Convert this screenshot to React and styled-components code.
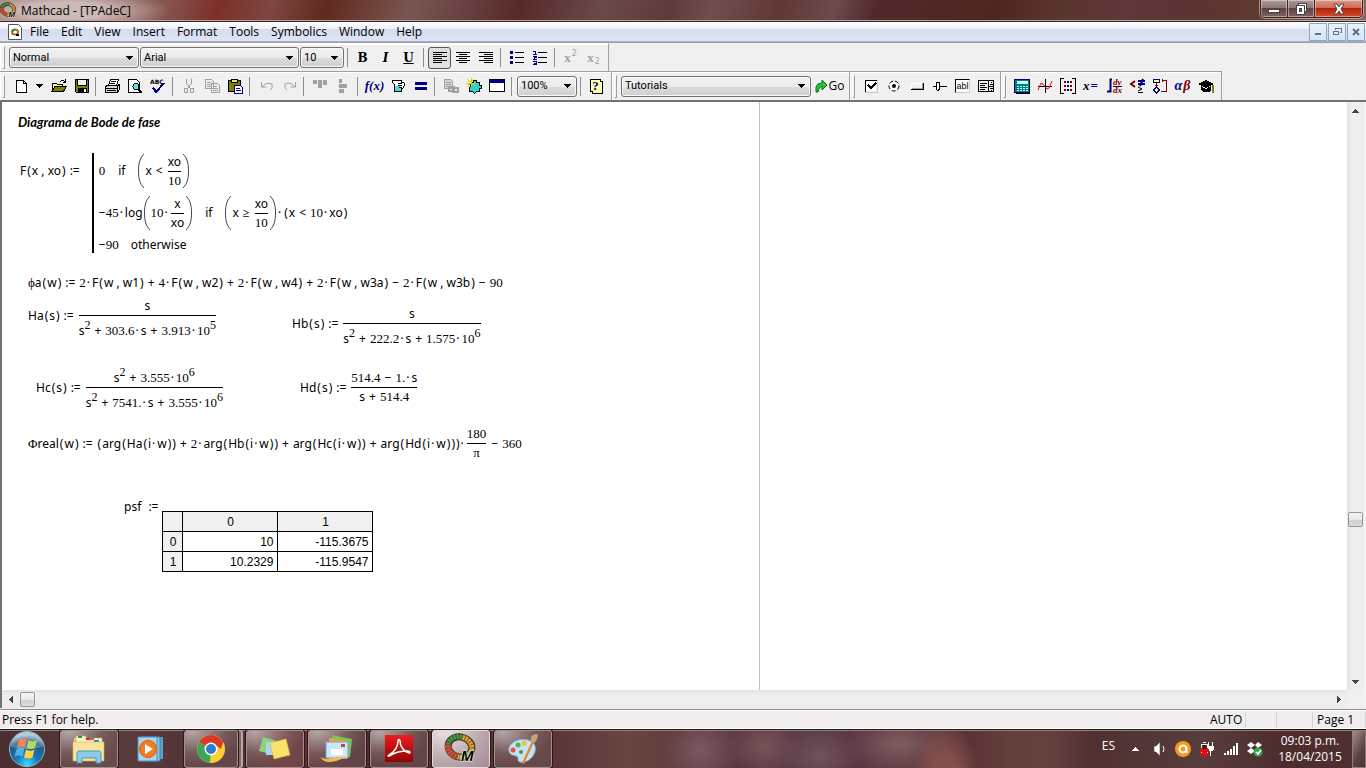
import React from "react";
import styled, { createGlobalStyle } from "styled-components";

const UI = '"Open Sans", "Noto Sans", sans-serif';
const MATH = '"Noto Sans", "Open Sans", sans-serif';
const NUM = '"Liberation Serif", serif';

const Global = createGlobalStyle`
  * { box-sizing: border-box; }
  body { margin: 0; font: 12px/16px ${UI}; color: #000; background: #f0f0f0; }
  button, select { font: inherit; color: inherit; padding: 0; margin: 0; border: 0; background: none; }
  svg { display: block; flex: none; }
`;

const Screen = styled.div`
  display: flex;
  flex-direction: column;
  min-height: 100vh;
  overflow: hidden;
`;

/* ---------- title bar ---------- */
const TitleBar = styled.header`
  display: flex;
  align-items: flex-start;
  height: 22px;
  border-bottom: 1px solid #3d2322;
  box-shadow: inset 0 -1px 0 #b9a5a4;
  background:
    radial-gradient(ellipse 105px 22px at 66px 11px, rgba(215, 198, 195, 0.85) 40%, rgba(180, 150, 145, 0) 100%),
    linear-gradient(110deg, #927571 0%, #8a625e 9%, #844f49 13%, #7c2f27 16%, #7d4741 20%, #5f291f 24%, #71483f 28%, #795653 30%, #684141 34%, #57292a 38%, #6a4a49 44%, #5e3b39 49%, #714e4e 52%, #5f3836 57%, #6d4a4c 61%, #51292c 64%, #4d281f 73%, #59352e 77%, #60373a 82%, #5a3534 87%, #603b2e 92%, #886463 100%);
`;
const Title = styled.h1`
  flex: 1;
  display: flex;
  align-items: center;
  gap: 4px;
  height: 21px;
  margin: 0;
  font-size: 12px;
  font-weight: 400;
`;
const WindowButtons = styled.div`
  display: flex;
  height: 18px;
  margin-right: 3px;
  border: 1px solid #35201f;
  border-top: 0;
  border-radius: 0 0 5px 5px;
  overflow: hidden;
  box-shadow: 0 0 0 1px rgba(255, 255, 255, 0.45);
`;
const WindowButton = styled.button`
  display: flex;
  align-items: center;
  justify-content: center;
  width: ${(p) => (p.$close ? 47 : 27)}px;
  height: 17px;
  border-right: ${(p) => (p.$close ? "0" : "1px solid #3d2726")};
  box-shadow: inset 0 0 0 1px rgba(255, 255, 255, 0.4);
  background: ${(p) =>
    p.$close
      ? "linear-gradient(#d99a8c 0, #cc6a57 45%, #b42109 50%, #d2502f 100%)"
      : "linear-gradient(#ab9897 0, #8f7776 45%, #5d4141 50%, #826463 100%)"};
`;

/* ---------- menu bar ---------- */
const MenuBar = styled.nav`
  display: flex;
  align-items: center;
  height: 20px;
  padding: 0 1px 0 8px;
  border-bottom: 1px solid #a9afc4;
  background: linear-gradient(#fff 0, #eef1f9 35%, #d5dcee 36%, #dde4f5 100%);
`;
const MenuItems = styled.div`
  display: flex;
  flex: 1;
  gap: 12px;
  margin-left: 8px;
`;
const MenuItem = styled.button`
  height: 18px;
`;
const ChildButtons = styled.div`
  display: flex;
  gap: 1px;
`;
const ChildButton = styled.button`
  display: flex;
  align-items: center;
  justify-content: center;
  width: 18px;
  height: 18px;
  border: 1px solid #8fa5bb;
  background: linear-gradient(#e9f3fc, #d4e5f6);
`;

/* ---------- tool bars ---------- */
const Bars = styled.div`
  display: flex;
  flex-direction: column;
  border-bottom: 2px solid #737373;
  background: #f0f0f0;
`;
const BarRow = styled.div`
  display: flex;
  height: 29px;
  border-top: ${(p) => (p.$partial ? 0 : 1)}px solid #a0a0a0;
`;
const Band = styled.div`
  display: flex;
  align-items: center;
  padding: 0 ${(p) => p.$end}px 0 2px;
  border-top: 1px solid ${(p) => (p.$top ? "#a0a0a0" : "#fff")};
  border-right: 1px solid #a0a0a0;
  box-shadow: inset 1px 1px 0 #fff;
`;
const Grip = styled.span`
  flex: none;
  width: 3px;
  height: 23px;
  margin-right: 4px;
  border: 1px solid #a0a0a0;
  border-left-color: #fff;
  border-top-color: #fff;
`;
const Rule = styled.span`
  flex: none;
  width: 1px;
  height: 19px;
  margin: 0 ${(p) => p.$right ?? 4}px 0 ${(p) => p.$left ?? 3}px;
  background: #8f8f8f;
`;
const Tool = styled.button`
  display: flex;
  align-items: center;
  justify-content: center;
  gap: 1px;
  flex: none;
  width: ${(p) => p.$w || 23}px;
  height: 22px;
  border: 1px solid ${(p) => (p.$on ? "#555" : "transparent")};
  border-radius: 3px;
  background: ${(p) => (p.$on ? "#e0e0e0" : "none")};
`;
const LetterTool = styled(Tool)`
  font: ${(p) => (p.$italic ? "italic " : "")}700 12px/16px "DejaVu Serif", serif;
  text-decoration: ${(p) => (p.$under ? "underline" : "none")};
`;
const ComboBox = styled.span`
  display: inline-grid;
  align-items: center;
  flex: none;
  width: ${(p) => p.$w}px;
  height: 21px;
  margin-right: ${(p) => p.$gap || 1}px;
  > * { grid-area: 1 / 1; }
  > svg { justify-self: end; margin-right: 5px; pointer-events: none; }
`;
const ComboSelect = styled.select`
  appearance: none;
  width: 100%;
  height: 21px;
  padding: 0 4px 0 3px;
  border: 1px solid #707070;
  border-radius: 3px;
  box-shadow: inset 0 0 0 1px #fafafa;
  background: linear-gradient(#f2f2f2, #ebebeb 50%, #dcdcdc 51%, #cfcfcf);
  font: 11px/16px Roboto, sans-serif;
`;

/* ---------- worksheet ---------- */
const Work = styled.main`
  display: grid;
  grid-template-columns: 1fr 17px;
  grid-template-rows: 1fr 18px;
  flex: 1;
  border-left: 2px solid #737373;
  border-right: 2px solid #f4f4f4;
  background: #f0f0f0;
`;
const Paper = styled.div`
  display: flex;
  background: #fff;
`;
const Sheet = styled.article`
  display: flex;
  flex-direction: column;
  align-items: flex-start;
  flex: 0 1 758px;
  padding: 12px 0 0 16px;
  border-right: 1px solid #c0c0c0;
`;
const Heading = styled.h2`
  margin: 0;
  font: italic 700 13px/16px Lato, sans-serif;
`;
const Region = styled.section`
  display: flex;
  align-items: flex-start;
  margin: ${(p) => p.$top}px 0 0 ${(p) => p.$left}px;
`;
const Pair = styled.div`
  display: grid;
  grid-template-columns: 264px auto;
  align-items: ${(p) => (p.$stagger ? "start" : "center")};
  margin: ${(p) => p.$top}px 0 0 ${(p) => p.$left}px;
  > :last-child { margin-top: ${(p) => (p.$stagger ? 8 : 0)}px; }
`;
const Math_ = styled.span`
  display: inline-flex;
  align-items: center;
  font: 12px/16px ${MATH};
  white-space: pre;
`;
const Run = styled.span`
  white-space: pre;
`;
const Num = styled.span`
  font: 13px/16px ${NUM};
`;
const Sup = styled.sup`
  font: 12px/0 ${NUM};
  vertical-align: 6px;
`;
const Op = styled.span`
  margin: 0 4px;
`;
const Dot = styled.span`
  margin: 0 2px 0 1px;
`;
const Delimiter = styled.span`
  padding-left: 1px;
  padding-right: ${(p) => (p.$close ? 0 : 1)}px;
`;
const Frac = styled.span`
  display: inline-grid;
  grid-template-rows: 1fr 1px 1fr;
  justify-items: center;
  margin: 0 1px;
  > :first-child { align-self: end; padding-bottom: 1px; }
  > :last-child { padding-top: ${(p) => (p.$tall ? 7 : 1)}px; }
`;
const FracBar = styled.span`
  width: 100%;
  height: 1px;
  background: #000;
`;
const Program = styled.div`
  display: flex;
  flex-direction: column;
  gap: 6px;
  margin-left: 8px;
  padding-left: 5px;
  border-left: 2px solid #000;
`;
const ProgramLine = styled.div`
  display: flex;
  align-items: center;
  min-height: ${(p) => (p.$short ? 16 : 36)}px;
`;
const Gap = styled.span`
  width: ${(p) => p.$w}px;
`;
const DataTable = styled.table`
  margin-top: 12px;
  border-collapse: collapse;
  font: 12px/16px "Liberation Sans", sans-serif;
  th, td {
    height: 20px;
    padding: 0 4px;
    border: 1px solid #000;
    font-weight: 400;
  }
  th { background: #f0f0f0; min-width: 20px; }
  thead th + th { width: 95px; }
  td { text-align: right; }
`;
const Scroll = styled.div`
  display: flex;
  flex-direction: ${(p) => (p.$v ? "column" : "row")};
  align-items: center;
  background: linear-gradient(${(p) => (p.$v ? "90deg, " : "")}#e3e3e3, #efefef 30%, #ececec);
`;
const Arrow = styled.button`
  display: flex;
  align-items: center;
  justify-content: center;
  width: 17px;
  height: 17px;
`;
const Thumb = styled.span`
  flex: none;
  width: 15px;
  height: 15px;
  border: 1px solid #979797;
  border-radius: 2px;
  background: linear-gradient(#f5f5f5, #e9e9eb 50%, #d0d0d3 51%, #dcdcdc);
`;
const Spacer = styled.span`
  flex: ${(p) => p.$n ?? 1};
`;

/* ---------- status bar ---------- */
const Status = styled.footer`
  display: flex;
  align-items: center;
  height: 20px;
  padding: 2px 0 0 2px;
  margin-top: 1px;
  border-top: 1px solid #8c8c8c;
  border-bottom: 1px solid #fff;
  box-shadow: inset 0 1px 0 #fff;
  background: #f1edec;
`;
const StatusCell = styled.span`
  width: ${(p) => p.$w}px;
  height: 16px;
  padding-left: 4px;
  border-right: 1px solid #d6d2d1;
`;

/* ---------- task bar ---------- */
const TaskBar = styled.div`
  display: flex;
  align-items: center;
  height: 39px;
  padding-left: 8px;
  border-top: 1px solid #1f1212;
  box-shadow: inset 0 1px 0 #9a8282;
  color: #fff;
  background:
    radial-gradient(ellipse 34px 60px at 945px 50px, #84504c 40%, rgba(132, 80, 76, 0)),
    radial-gradient(ellipse 55px 34px at 900px 14px, #7f5e5f, rgba(127, 94, 95, 0)),
    radial-gradient(ellipse 40px 30px at 820px 26px, #70525a, rgba(112, 82, 90, 0)),
    radial-gradient(ellipse 36px 30px at 765px 16px, #775458, rgba(119, 84, 88, 0)),
    radial-gradient(ellipse 40px 40px at 700px 20px, #7a5960, rgba(122, 89, 96, 0)),
    linear-gradient(90deg, #4a2e2f 0, #5c3c3c 8%, #4f3034 17%, #702f34 21%, #4d2b30 26%, #5a3436 40%, #674542 46%, #643f3d 48%, #5a3a3d 50%, #593a48 60%, #57303a 68%, #5a3434 71%, #633f3d 74%, #64403e 77%, #4f3030 80%, #583d3d 88%, #4d2c2c 94%, #4f3030 100%);
`;
const Start = styled.button`
  width: 38px;
  height: 38px;
  margin-right: 14px;
`;
const Task = styled.button`
  display: flex;
  align-items: center;
  justify-content: center;
  flex: none;
  width: ${(p) => p.$w || 58}px;
  height: 38px;
  margin-right: ${(p) => p.$gap || 4}px;
  border: 1px solid ${(p) => (p.$plain ? "transparent" : p.$active ? "#e4dcdc" : "#a38f8f")};
  border-radius: 3px;
  box-shadow: ${(p) => (p.$plain ? "none" : p.$stack ? "0 0 0 1px #2a1718, 4px 0 0 -1px #806869, 5px 0 0 0 #b6a5a5" : "0 0 0 1px #2a1718")};
  background: ${(p) =>
    p.$plain
      ? "none"
      : p.$active
      ? "radial-gradient(ellipse at 20% 0, #e9e1e1, #bdabaf 55%, #a3898f)"
      : "radial-gradient(ellipse 50px 34px at 15% 0, #b7a8a8, rgba(140, 115, 115, 0.6) 65%, rgba(120, 92, 92, 0.5))"};
`;
const Tray = styled.div`
  display: flex;
  align-items: center;
  gap: 8px;
`;
const TrayButton = styled.button`
  width: 16px;
  height: 16px;
`;
const Lang = styled.span`
  margin: 0 4px 6px 0;
`;
const Clock = styled.time`
  width: 76px;
  margin: 0 4px 0 9px;
  text-align: center;
`;
const ShowDesktop = styled.button`
  width: 14px;
  height: 38px;
  border: 1px solid #8f7b7b;
  background: linear-gradient(120deg, #a08d8d, #5d4242 60%, #4a3030);
`;

/* ---------- drawings ---------- */
const Pix = ({ children, w = 16, h = 16, smooth }) => (
  <svg width={w} height={h} viewBox={`0 0 ${w} ${h}`} shapeRendering={smooth ? "auto" : "crispEdges"} aria-hidden="true">
    {children}
  </svg>
);
const Caret = () => (
  <Pix w={8} h={4}><path d="M0 0h7v1h-1v1h-1v1h-1v1h-1v-1h-1v-1h-1v-1h-1z" /></Pix>
);
const Ring = ({ size = 16 }) => (
  <svg width={size} height={size} viewBox="0 0 32 32" overflow="visible" aria-hidden="true">
    <g transform="rotate(14 15 14)" fill="none">
      <ellipse cx="15" cy="14" rx="12" ry="10" stroke="#26301b" strokeWidth="7" />
      <path d="M3 14C3 7 9 4 15 4" stroke="#37a048" strokeWidth="5" />
      <path d="M15 4c7 0 12 5 12 10" stroke="#e2a33c" strokeWidth="5" />
      <path d="M27 14c0 6-6 10-12 10" stroke="#dccb48" strokeWidth="5" />
      <path d="M15 24C8 24 3 20 3 14" stroke="#d0563c" strokeWidth="6" />
      <ellipse cx="15" cy="14" rx="12" ry="10" stroke="#5a1f14" strokeOpacity=".6" strokeWidth="6" strokeDasharray="1 2" />
    </g>
    <text x="16" y="28" fontFamily="Liberation Sans" fontStyle="italic" fontWeight="700" fontSize="15" stroke="#fff" strokeWidth="1" paintOrder="stroke">M</text>
  </svg>
);

const N = "#000080";
const G = "#a0a0a0";
const R = "#800000";
const icons = {
  newDoc: <path d="M3.500 2.500h7l3 3v9h-10zM10.500 2.500v3h3" fill="#fff" stroke="#000" />,
  open: (
    <>
      <path d="M1.500 13.500v-8h4l1 1h5v2" fill="#ffff80" stroke="#000" />
      <path d="M1 13.500l3-5h11.500l-3 5z" fill="#808000" stroke="#000" />
      <path d="M9 3.500h1M10 2.500h3M13 3.500h1M14.500 1v4M12 4.500h2" stroke="#000" fill="none" />
    </>
  ),
  save: (
    <>
      <path d="M1.500 1.500h13v13h-12l-1-1z" fill="#808000" stroke="#000" />
      <path d="M3.500 1.500h9v6h-9z" fill="#f0f0f0" stroke="#000" />
      <path d="M4 10h9v5h-9z" fill="#000" /><path d="M10 11h2v3h-2z" fill="#fff" />
    </>
  ),
  print: (
    <>
      <path d="M4.500 7.500l2-6h8l-2 6" fill="#fff" stroke="#000" />
      <path d="M7 3.500h5M6 5.500h5" stroke="#000" />
      <path d="M1.500 8.500l2-1h10l2-1v5l-2 3h-12z" fill="#d8d8d8" stroke="#000" />
      <path d="M1 10.500h12M3 12.500h9M13.500 8v6" stroke="#000" /><path d="M9 11h2v1h-2z" fill="#cc0" />
    </>
  ),
  preview: (
    <>
      <path d="M1.500 14.500v-13h8l3 3v10z" fill="#fff" stroke="#000" />
      <circle cx="9" cy="8.500" r="3" fill="#60e0f0" stroke="#000" />
      <path d="M11 11l4 4" stroke="#000" strokeWidth="2" />
    </>
  ),
  spell: (
    <>
      <text x="0" y="6" fontFamily="DejaVu Sans" fontWeight="700" fontSize="6">ABC</text>
      <path d="M3 9.500l3 4.500 8-9" fill="none" stroke={N} strokeWidth="2" />
    </>
  ),
  cut: <path d="M5.500 1v4l4 6M10.500 1v4l-4 6M3.500 10.500h3v4h-3zM9.500 10.500h3v4h-3z" fill="none" stroke={G} />,
  copy: <path d="M1.500 1.500h6l2 2v7h-8zM3 4.500h4M3 6.500h5M3 8.500h5M7.500 5.500h6l2 2v7h-8zM9 8.500h4M9 10.500h5M9 12.500h5" fill="#eee" stroke={G} />,
  paste: (
    <>
      <path d="M1.500 2.500h12v11h-12z" fill="#808000" stroke="#000" />
      <path d="M4.500 1.500h6v3h-6z" fill="#e8e860" stroke="#000" />
      <path d="M7.500 7.500h6l2 2v6h-8z" fill="#fff" stroke={N} /><path d="M9 10.500h4M9 12.500h5" stroke={N} />
    </>
  ),
  undo: <path d="M2.500 4v5h5M3 9l3-3q4-2 7 0v4l-2 2" fill="none" stroke={G} />,
  redo: <path d="M13.500 4v5h-5M13 9l-3-3q-4-2-7 0v4l2 2" fill="none" stroke={G} />,
  alignTop: <path d="M1 2h4v4H1zM6 2h4v8H6zM11 2h4v5h-4z" fill={G} />,
  alignSide: <path d="M4 1h3v4H4zM4 6h8v4H4zM4 11h5v4H4z" fill={G} />,
  left: <path d="M1 2.500h14M1 4.500h9M1 6.500h14M1 8.500h9M1 10.500h14M1 12.500h9" stroke="#000" />,
  center: <path d="M1 2.500h14M4 4.500h8M1 6.500h14M4 8.500h8M1 10.500h14M4 12.500h8" stroke="#000" />,
  right: <path d="M1 2.500h14M6 4.500h9M1 6.500h14M6 8.500h9M1 10.500h14M6 12.500h9" stroke="#000" />,
  bullets: (
    <>
      <path d="M1 1h3v3H1zM1 6h3v3H1zM1 11h3v3H1z" fill={N} />
      <path d="M6 2.500h9M6 7.500h9M6 12.500h9" stroke="#000" />
    </>
  ),
  numbers: (
    <>
      <path d="M1 1.500h2v3M1 4.500h4M1 6.500h3v1h-1l-1 2h3M1 11.500h3v3h-3M2 13.500h2" fill="none" stroke={N} />
      <path d="M6 2.500h9M6 7.500h9M6 12.500h9" stroke="#000" />
    </>
  ),
  cup: (
    <>
      <path d="M3.500 2.500h8v2h2l1 1v2l-2 3h-1v3h-7v-7l-2-2v-2z" fill="#fff" stroke="#000" />
      <path d="M5 8h6v5H5z" fill="#50d8d8" /><path d="M8 5.500h4M8 7.500h4M9 9.500h3" stroke="#000" />
    </>
  ),
  equals: <path d="M2 4h12v3H2zM2 9h12v3H2z" fill={N} />,
  link: (
    <>
      <path d="M1.500 1.500h6l2 2v7h-8z" fill="#d5d5d5" stroke={G} />
      <path d="M3 4.500h5M3 6.500h5M3 8.500h3" stroke={G} />
      <path d="M5.500 8.500h5v4h-5zM9.500 9.500h5v4h-5z" fill="none" stroke={G} strokeWidth="2" />
    </>
  ),
  puzzle: (
    <>
      <path d="M4.500 4.500h3v-2h3v2h3v3h2v3h-2v3h-3l-2 2-2-2h-3z" fill="#30d0d0" stroke="#000" />
      <path d="M1 1l8 7M5 0v8M0 5h9M8 1L1 9" stroke="#d8d800" />
    </>
  ),
  windowed: <><path d="M.5 1.500h15v12H.5z" fill="#fff" stroke="#000" /><path d="M1 2h14v3H1z" fill={N} /></>,
  help: <path d="M2.500 1.500h10v2h2v12h-10v-2h-2z" fill="#ffffb0" stroke="#000" />,
  check: (
    <>
      <path d="M2.500 14V2.500H14" fill="none" stroke="#000" /><path d="M3 3h10v10H3z" fill="#fff" />
      <path d="M14.500 2v12.500H2" fill="none" stroke="#c8c8c8" />
      <path d="M5 7l3 3 5-5" fill="none" stroke="#000" strokeWidth="2" />
    </>
  ),
  radio: <><circle cx="8" cy="8" r="5" fill="#fff" stroke="#000" strokeDasharray="4 2" /><circle cx="8" cy="8" r="2" /></>,
  push: <><path d="M2 11.500h12.500V5" fill="none" stroke="#000" /><path d="M2.500 10V5.500H13" fill="none" stroke="#fff" /><path d="M3 10.500h10.500V5" fill="none" stroke={G} /></>,
  slider: <path d="M1 8.500h3M8 8.500h7M4.500 4.500h3v7l-2 1-1-1z" fill="#fff" stroke="#000" />,
  listBox: <path d="M.5 2.500h15v11H.5zM10.500 3v10M2 5.500h7M2 7.500h5M2 9.500h7M2 11.500h5M11 8h5M12 6.500h3M12 10.500h3M13 4.500h1M13 12.500h1" fill="none" stroke="#000" />,
  calc: (
    <>
      <path d="M.5 1.500h15v13H.5z" fill="#008080" stroke={N} /><path d="M3 3h11v3H3z" fill="#d0ffff" />
      <path d="M3 8.500h11M3 10.500h11M3 12.500h11" stroke="#bff" strokeDasharray="2 1" /><path d="M15.500 2v13H2" fill="none" stroke="#000" />
    </>
  ),
  graph: <><path d="M8.500 1v14M1 8.500h14" stroke="#000" /><path d="M1 12l3-7 2 1 4 5 2-1 3-7" fill="none" stroke="#e00" /></>,
  matrix: (
    <>
      <path d="M4 .5H.5v15H4M12 .5h3.500v15H12" fill="none" stroke="#000" />
      <path d="M4 4h2M10 4h2M4 8h2M10 8h2M4 12h2M10 12h2" stroke={R} strokeWidth="2" />
      <path d="M7 4h2M7 8h2M7 12h2" stroke={N} strokeWidth="2" />
    </>
  ),
  calculus: (
    <>
      <path d="M6 1.500H4.500v12H2v1" fill="none" stroke={N} strokeWidth="2" />
      <path d="M7 8.500h9" stroke="#000" />
      <text x="7" y="7" fontFamily="Liberation Serif" fontStyle="italic" fontWeight="700" fontSize="9" fill={R}>dy</text>
      <text x="7" y="15" fontFamily="Liberation Serif" fontStyle="italic" fontWeight="700" fontSize="9" fill={R}>dx</text>
    </>
  ),
  compare: (
    <>
      <path d="M6 3L2 6l4 3" fill="none" stroke={R} strokeWidth="2" />
      <path d="M9 3h7M9 6h7M14 1l-3 7" stroke={N} strokeWidth="2" />
      <path d="M9 9l4 2-4 2M9 14.500h5" fill="none" stroke="#000" />
    </>
  ),
  flow: (
    <>
      <path d="M1.500 1.500h6v3h-6z" fill="#ff6" stroke={N} /><path d="M4.500 5v4M14.500 13.500v-11h-5M9 13.500h6M3 7.500h3M10.500 1v3" fill="none" stroke={R} />
      <path d="M4.500 9l3 3-3 3-3-3z" fill="#ff6" stroke={N} />
    </>
  ),
  cap: <><path d="M8 2l8 4-8 4-8-4z" /><path d="M3 8l5 3 5-3v4l-2 2H5l-2-2z" /><path d="M15 7v8" stroke="#808000" strokeWidth="2" /></>,
};

/* ---------- small parts ---------- */
const IconTool = ({ name, label, on, w, smooth }) => (
  <Tool aria-label={label || name} $on={on} $w={w}><Pix smooth={smooth}>{icons[name]}</Pix></Tool>
);
const Combo = ({ value, label, w, gap }) => (
  <ComboBox $w={w} $gap={gap}>
    <ComboSelect aria-label={label} defaultValue={value}><option>{value}</option></ComboSelect>
    <Caret />
  </ComboBox>
);
const Serifed = styled.span`
  font: ${(p) => (p.$italic ? "italic " : "")}700 ${(p) => p.$size || 13}px/16px "Liberation Serif", serif;
  color: ${(p) => p.$color || "#000"};
`;
const Script = styled.span`
  align-self: ${(p) => (p.$low ? "flex-end" : "flex-start")};
  font: 8px/12px "DejaVu Sans", sans-serif;
  color: ${G};
`;
const HelpIcon = styled.span`
  display: grid;
  place-items: center;
  > * { grid-area: 1 / 1; }
`;
const TextBoxIcon = styled.span`
  width: 15px;
  height: 14px;
  border: 1px solid #000;
  border-right-color: #ccc;
  border-bottom-color: #ccc;
  background: #fff;
  font: 9px/12px "Liberation Sans", sans-serif;
`;

/* Splits a formula into serif numbers, raised exponents, operators and sans names. */
const F = ({ children }) => {
  const parts = children.match(/\^\d+| ?:= ?| [+<≥−] |·|[ϕΦπ]|(?<![A-Za-z])\d[\d.]*|[A-Za-z]+\d*[a-z]*|./g) || [];
  return (
    <Run>
      {parts.map((t, i) => {
        if (t[0] === "^") return <Sup key={i}>{t.slice(1)}</Sup>;
        if (/^ ?:= ?$/.test(t)) return <Op key={i}>:=</Op>;
        if (/^ [+<≥−] $/.test(t)) return <Op key={i}>{t.trim()}</Op>;
        if (t === "·") return <Dot key={i}>·</Dot>;
        if (t === "(" || t === ")") return <Delimiter key={i} $close={t === ")"}>{t}</Delimiter>;
        if (/^[\dπΦϕ]/.test(t)) return <Num key={i}>{t}</Num>;
        return t;
      })}
    </Run>
  );
};
const Fraction = ({ top, bottom, tall }) => (
  <Frac $tall={tall}>
    <F>{top}</F>
    <FracBar />
    <F>{bottom}</F>
  </Frac>
);
const Paren = ({ close }) => (
  <svg width="8" height="36" viewBox="0 0 8 36" aria-hidden="true">
    <path d={close ? "M1 1C5 5 6.500 10 6.500 18S5 31 1 35" : "M7 1C3 5 1.500 10 1.500 18S3 31 7 35"} fill="none" stroke="#444" />
  </svg>
);
const Transfer = ({ name, top, bottom, tall }) => (
  <Math_><F>{name + " :="}</F><Fraction top={top} bottom={bottom} tall={tall} /></Math_>
);

const menus = ["File", "Edit", "View", "Insert", "Format", "Tools", "Symbolics", "Window", "Help"];
const rows = [["10", "-115.3675"], ["10.2329", "-115.9547"]];

const FormatBar = () => (
  <BarRow>
    <Band $end={3}>
      <Grip />
      <Combo value="Normal" label="Style" w={130} />
      <Combo value="Arial" label="Font" w={159} />
      <Combo value="10" label="Size" w={44} />
      <Rule $left={2} $right={3} />
      <LetterTool>B</LetterTool>
      <LetterTool $italic>I</LetterTool>
      <LetterTool $under>U</LetterTool>
      <Rule />
      <IconTool name="left" on /><IconTool name="center" /><IconTool name="right" />
      <Rule />
      <IconTool name="bullets" /><IconTool name="numbers" />
      <Rule />
      <Tool aria-label="Superscript"><Serifed $color={G}>x</Serifed><Script>2</Script></Tool>
      <Tool aria-label="Subscript"><Serifed $color={G}>x</Serifed><Script $low>2</Script></Tool>
    </Band>
  </BarRow>
);

const StandardBar = () => (
  <BarRow $partial>
    <Band $top $end={4}>
      <Grip />
      <IconTool name="newDoc" label="New" />
      <Tool $w={15} aria-label="New from template"><Caret /></Tool>
      <IconTool name="open" /><IconTool name="save" />
      <Rule $left={2} />
      <IconTool name="print" /><IconTool name="preview" /><IconTool name="spell" />
      <Rule />
      <IconTool name="cut" /><IconTool name="copy" /><IconTool name="paste" />
      <Rule $right={5} />
      <IconTool name="undo" smooth /><IconTool name="redo" smooth />
      <Rule $left={2} />
      <IconTool name="alignTop" /><IconTool name="alignSide" />
      <Rule $right={5} />
      <Tool aria-label="Insert function"><Serifed $italic $color={N}>f(x)</Serifed></Tool>
      <IconTool name="cup" label="Insert unit" /><IconTool name="equals" label="Calculate" />
      <Rule $left={2} />
      <IconTool name="link" /><IconTool name="puzzle" label="Component" /><IconTool name="windowed" label="Run" />
      <Rule $right={5} />
      <Combo value="100%" label="Zoom" w={60} />
      <Rule $left={2} $right={3} />
      <Tool aria-label="Help"><HelpIcon><Pix>{icons.help}</Pix><Serifed $color={N}>?</Serifed></HelpIcon></Tool>
    </Band>
    <Band $top $end={4}>
      <Grip />
      <Combo value="Tutorials" label="Resources" w={190} gap={3} />
      <Tool $w={31}>
        <Pix w={13} smooth>
          <path d="M1 14V9q1-4 6-4V2l5 5-5 5V8Q4 8 3 14z" fill="#22d022" stroke="#063" />
        </Pix>
        Go
      </Tool>
    </Band>
    <Band $top $end={3}>
      <Grip />
      <IconTool name="check" /><IconTool name="radio" smooth /><IconTool name="push" /><IconTool name="slider" />
      <Tool aria-label="Text box"><TextBoxIcon>abl</TextBoxIcon></Tool>
      <IconTool name="listBox" />
    </Band>
    <Band $top $end={4}>
      <Grip />
      <IconTool name="calc" /><IconTool name="graph" smooth /><IconTool name="matrix" />
      <Tool aria-label="Evaluation"><Serifed $italic>x</Serifed><Serifed $color={N}>=</Serifed></Tool>
      <IconTool name="calculus" smooth /><IconTool name="compare" smooth /><IconTool name="flow" />
      <Tool aria-label="Greek"><Serifed $italic $size={14} $color={N}>α</Serifed><Serifed $italic $size={14} $color={R}>β</Serifed></Tool>
      <IconTool name="cap" />
    </Band>
  </BarRow>
);

const Worksheet = () => (
  <Sheet>
    <Heading>Diagrama de Bode de fase</Heading>
    <Region $top={23} $left={2}>
      <ProgramLine><Math_><F>{"F(x , xo) :="}</F></Math_></ProgramLine>
      <Program>
        <ProgramLine>
          <Math_>
            <F>0</F><Gap $w={13} />if<Gap $w={12} />
            <Paren /><F>{"x < "}</F><Fraction top="xo" bottom="10" /><Paren close />
          </Math_>
        </ProgramLine>
        <ProgramLine>
          <Math_>
            <F>−45·log</F><Paren /><F>10·</F><Fraction top="x" bottom="xo" /><Paren close />
            <Gap $w={12} />if<Gap $w={12} />
            <Paren /><F>{"x ≥ "}</F><Fraction top="xo" bottom="10" /><Paren close /><F>{"·(x < 10·xo)"}</F>
          </Math_>
        </ProgramLine>
        <ProgramLine $short>
          <Math_><F>−90</F><Gap $w={12} />otherwise</Math_>
        </ProgramLine>
      </Program>
    </Region>
    <Region $top={22} $left={10}>
      <Math_><F>{"ϕa(w) := 2·F(w , w1) + 4·F(w , w2) + 2·F(w , w4) + 2·F(w , w3a) − 2·F(w , w3b) − 90"}</F></Math_>
    </Region>
    <Pair $top={1} $left={10} $stagger>
      <Transfer name="Ha(s)" top="s" bottom="s^2 + 303.6·s + 3.913·10^5" tall />
      <Transfer name="Hb(s)" top="s" bottom="s^2 + 222.2·s + 1.575·10^6" tall />
    </Pair>
    <Pair $top={17} $left={18}>
      <Transfer name="Hc(s)" top="s^2 + 3.555·10^6" bottom="s^2 + 7541.·s + 3.555·10^6" tall />
      <Transfer name="Hd(s)" top="514.4 − 1.·s" bottom="s + 514.4" />
    </Pair>
    <Region $top={15} $left={10}>
      <Math_>
        <F>{"Φreal(w) := (arg(Ha(i·w)) + 2·arg(Hb(i·w)) + arg(Hc(i·w)) + arg(Hd(i·w)))·"}</F>
        <Fraction top="180" bottom="π" />
        <F>{" − 360"}</F>
      </Math_>
    </Region>
    <Region $top={38} $left={106}>
      <Math_><F>{"psf  :="}</F></Math_>
      <DataTable>
        <thead><tr><th aria-label="Index" /><th scope="col">0</th><th scope="col">1</th></tr></thead>
        <tbody>
          {rows.map((r, i) => (
            <tr key={i}><th scope="row">{i}</th>{r.map((c) => <td key={c}>{c}</td>)}</tr>
          ))}
        </tbody>
      </DataTable>
    </Region>
  </Sheet>
);

const StartOrb = () => (
  <svg width="38" height="38" viewBox="0 0 38 38" aria-hidden="true">
    <defs>
      <radialGradient id="orb" cx="50%" cy="95%" r="85%">
        <stop offset="0" stopColor="#3fe0ff" /><stop offset=".4" stopColor="#1576b8" /><stop offset=".8" stopColor="#24557f" /><stop offset="1" stopColor="#9fbdd0" />
      </radialGradient>
    </defs>
    <circle cx="19" cy="19" r="17.500" fill="url(#orb)" stroke="#8fb6cc" />
    <path d="M11 10q4-2.500 8-.5l-2 8q-4-2-8 .5z" fill="#f0642a" />
    <path d="M20.500 10q4 2.500 8.500 0l-2 8q-4 2-8.500 0z" fill="#9dce3c" />
    <path d="M8.500 19q4-2.500 8-.5l-2 8q-4-2-8 .5z" fill="#4fb0ea" />
    <path d="M18 19.500q4 2.500 8.500 0l-2 8q-4 2-8.500 0z" fill="#ffd23c" />
    <path d="M3 17a16 15 0 0 1 32 0q-16 4-32 0z" fill="#fff" opacity=".22" />
  </svg>
);
const Explorer = () => (
  <svg width="34" height="30" viewBox="0 0 34 30" aria-hidden="true">
    <path d="M2 4h10l1 3h18v20H2z" fill="#e9c96b" /><path d="M4 2h10v4h8V4h8v5H4z" fill="#fbf3cf" stroke="#c9a850" strokeWidth=".6" />
    <path d="M6 2h4v2H6z" fill="#22a040" /><path d="M14 4h4v2h-4z" fill="#c33" /><path d="M22 6h5v2h-5z" fill="#28c" />
    <path d="M1 8h31v19H1z" fill="#f8e59b" stroke="#d0b05c" strokeWidth=".6" />
    <path d="M5 29V19q0-2 2-2h20q2 0 2 2v10h-5v-5H10v5z" fill="#8ccbea" stroke="#4d95bd" />
  </svg>
);
const MediaPlayer = () => (
  <svg width="28" height="26" viewBox="0 0 28 26" aria-hidden="true">
    <path d="M8 1h18v22H8z" fill="#5aa2cf" /><path d="M4 1h19v24H4z" fill="#8cc2e2" stroke="#3c82b0" /><path d="M1 1h19v24H1z" fill="#a9d3ec" stroke="#4d90bb" />
    <circle cx="11" cy="13" r="8.500" fill="#f47b20" stroke="#d85d0a" /><path d="M8 8l8 5-8 5z" fill="#fff" />
  </svg>
);
const Chrome = () => (
  <svg width="28" height="28" viewBox="0 0 28 28" aria-hidden="true">
    <circle cx="14" cy="14" r="14" fill="#fdd12f" />
    <path d="M14 14L1.900 7A14 14 0 0 1 26.100 7z" fill="#db3a2b" />
    <path d="M14 14L1.900 7A14 14 0 0 0 13 28z" fill="#3aa757" />
    <path d="M14 7h12.100L24 14z" fill="#db3a2b" />
    <circle cx="14" cy="14" r="6.500" fill="#fff" /><circle cx="14" cy="14" r="5" fill="#2f7bd0" />
  </svg>
);
const Notes = () => (
  <svg width="34" height="28" viewBox="0 0 34 28" aria-hidden="true">
    <path d="M5 2l14 4-4 14L1 16z" fill="#8fd07c" /><path d="M8 7h14v13H8z" fill="#a8d8ee" />
    <path d="M12 8l16-4 4 16-16 4z" fill="#fbe36b" stroke="#d7b93a" strokeWidth=".6" />
  </svg>
);
const Mail = () => (
  <svg width="34" height="30" viewBox="0 0 34 30" aria-hidden="true">
    <path d="M12 1l20 4-2 18-18-3z" fill="#7cc35b" /><path d="M9 4l19 3-1 18H9z" fill="#f3a33a" />
    <path d="M6 8h22v16H6z" fill="#cfe6f8" stroke="#6da6d5" /><path d="M11 15h12v6H11z" fill="#fff" /><path d="M21 10h4v3h-4z" fill="#c84a22" />
    <path d="M1 23c7 5 16-2 28 0-8 1-12 5-19 5-4 0-8-1-9-5z" fill="#f4b955" />
  </svg>
);
const Acrobat = () => (
  <svg width="28" height="28" viewBox="0 0 28 28" aria-hidden="true">
    <defs><linearGradient id="pdf" x1="0" y1="0" x2="0" y2="1"><stop offset="0" stopColor="#ee1c1c" /><stop offset="1" stopColor="#8d0505" /></linearGradient></defs>
    <path d="M0 0h28v27H0z" fill="url(#pdf)" />
    <path d="M4 20c5-3 9-8 9-14 0-2 2-2 2 0 0 5 4 11 9 12 2 0 1-2-2-2-6 0-11 1-16 4-2 2-4 1-2 0z" fill="none" stroke="#fff" strokeWidth="1.500" />
  </svg>
);
const Paint = () => (
  <svg width="34" height="32" viewBox="0 0 34 32" aria-hidden="true">
    <path d="M3 15C5 8 14 5 22 7c7 2 9 8 6 14-3 7-11 9-14 8-4-1 0-5-4-6-5-1-8-3-7-8z" fill="#c5e2f3" stroke="#7eb0d0" />
    <circle cx="7" cy="17" r="2.500" fill="#e5523f" /><circle cx="12" cy="12" r="2.500" fill="#5ab04a" /><circle cx="18" cy="10" r="2.500" fill="#f1bd32" /><circle cx="15" cy="19" r="2" fill="#684" />
    <path d="M26 8l2 1-10 22-2-1z" fill="#e48330" /><path d="M25 8c-1-4 1-7 6-7l1 2c-1 1 0 4-4 7z" fill="#c8a276" />
  </svg>
);

const tasks = [
  { n: "Explorer", i: <Explorer /> },
  { n: "Media Player", i: <MediaPlayer />, plain: true },
  { n: "Chrome", i: <Chrome />, stack: true, w: 54, gap: 8 },
  { n: "Sticky Notes", i: <Notes /> },
  { n: "Mail", i: <Mail /> },
  { n: "Acrobat", i: <Acrobat /> },
  { n: "Mathcad", i: <Ring size={32} />, active: true },
  { n: "Paint", i: <Paint /> },
];

export default function App() {
  return (
    <Screen>
      <Global />
      <TitleBar>
        <Title><Ring size={17} />Mathcad - [TPAdeC]</Title>
        <WindowButtons>
          <WindowButton aria-label="Minimize"><Pix w={12} h={12}><path d="M.5 6.500h11v3H.5z" fill="#fff" stroke="#444" /></Pix></WindowButton>
          <WindowButton aria-label="Restore">
            <Pix w={13} h={12}>
              <path d="M3.500.5h8v8h-8z" fill="#fff" stroke="#444" />
              <path d="M1.500 2.500h8v9h-8z" fill="#fff" stroke="#444" /><path d="M4.500 5.500h2v3h-2z" fill="#666" stroke="#444" />
            </Pix>
          </WindowButton>
          <WindowButton $close aria-label="Close">
            <Pix w={12} h={12} smooth><path d="M1 1h3l2 3 2-3h3L8 6l3 5H8L6 8l-2 3H1l3-5z" fill="#fff" stroke="#444" /></Pix>
          </WindowButton>
        </WindowButtons>
      </TitleBar>

      <MenuBar>
        <Pix w={14} smooth>
          <path d="M.5.5h10l3 3v12H.5z" fill="#fff" stroke="#555" />
          <ellipse cx="7" cy="8" rx="3" ry="2.500" fill="none" stroke="#b06a30" strokeWidth="2" /><path d="M4 8a3 3 0 0 1 3-2" fill="none" stroke="#383" strokeWidth="2" /><path d="M8 10h3v2H8z" />
        </Pix>
        <MenuItems>{menus.map((m) => <MenuItem key={m}>{m}</MenuItem>)}</MenuItems>
        <ChildButtons>
          <ChildButton aria-label="Minimize document"><Pix w={8} h={8}><path d="M1 5h6v2H1z" fill="#5f7183" /></Pix></ChildButton>
          <ChildButton aria-label="Restore document"><Pix w={9} h={9}><path d="M2.500 3V1.500h6v4H7M2 1h7M.5 4.500h5v3h-5zM0 4h6" fill="none" stroke="#5f7183" /></Pix></ChildButton>
          <ChildButton aria-label="Close document"><Pix w={8} h={8} smooth><path d="M1 1l6 6M7 1L1 7" stroke="#5f7183" strokeWidth="2" /></Pix></ChildButton>
        </ChildButtons>
      </MenuBar>

      <Bars>
        <FormatBar />
        <StandardBar />
      </Bars>

      <Work>
        <Paper><Worksheet /></Paper>
        <Scroll $v>
          <Arrow aria-label="Scroll up"><Pix w={7} h={4}><path d="M3 0h1v1h1v1h1v1h1v1H0V3h1V2h1V1h1z" fill="#444" /></Pix></Arrow>
          <Spacer $n={394} /><Thumb /><Spacer $n={146} />
          <Arrow aria-label="Scroll down"><Pix w={7} h={4}><path d="M0 0h7v1H6v1H5v1H4v1H3V3H2V2H1V1H0z" fill="#444" /></Pix></Arrow>
        </Scroll>
        <Scroll>
          <Arrow aria-label="Scroll left"><Pix w={4} h={7}><path d="M4 0v7H3V6H2V5H1V4H0V3h1V2h1V1h1V0z" fill="#444" /></Pix></Arrow>
          <Spacer $n={1} /><Thumb /><Spacer $n={1290} />
          <Arrow aria-label="Scroll right"><Pix w={4} h={7}><path d="M0 0v7h1V6h1V5h1V4h1V3H3V2H2V1H1V0z" fill="#444" /></Pix></Arrow>
        </Scroll>
      </Work>

      <Status>
        Press F1 for help.
        <Spacer />
        <StatusCell $w={40}>AUTO</StatusCell>
        <StatusCell $w={31} />
        <StatusCell $w={36} />
        <StatusCell $w={53}>Page 1</StatusCell>
      </Status>

      <TaskBar>
        <Start aria-label="Start"><StartOrb /></Start>
        {tasks.map((t) => (
          <Task key={t.n} aria-label={t.n} $plain={t.plain} $stack={t.stack} $active={t.active} $w={t.w} $gap={t.gap}>{t.i}</Task>
        ))}
        <Spacer />
        <Tray>
          <Lang>ES</Lang>
          <TrayButton aria-label="Hidden icons"><Pix><path d="M8 6h1v1h1v1h1v1h1v1H5V9h1V8h1V7h1z" fill="#fff" /></Pix></TrayButton>
          <TrayButton aria-label="Volume"><Pix smooth><path d="M3 5h2l4-4v14l-4-4H3z" fill="#fff" stroke="#444" strokeWidth=".6" /><path d="M12 5q2 3 0 6" fill="none" stroke="#fff" /></Pix></TrayButton>
          <TrayButton aria-label="Antivirus"><Pix smooth><circle cx="8" cy="8" r="8" fill="#f79a1c" /><circle cx="8" cy="8" r="3.500" fill="none" stroke="#fff" strokeWidth="2" /><path d="M11.500 6v6" stroke="#fff" strokeWidth="2" /></Pix></TrayButton>
          <TrayButton aria-label="Power"><Pix><path d="M2.500 3.500h6v10h-6zM4 1.500h3" fill="#422" stroke="#eee" /><path d="M8 5h7v3l-2 2h-3l-2-2z" fill="#fff" /><path d="M9 1h1v4H9zM13 1h1v4h-1zM11 9h1v6h-1z" fill="#fff" /><path d="M2 8l7 7M9 8l-7 7" stroke="#e01010" strokeWidth="3" /></Pix></TrayButton>
          <TrayButton aria-label="Network"><Pix><path d="M1 12h2v2H1zM4 10h2v4H4zM7 8h2v6H7zM10 5h2v9h-2zM13 2h2v12h-2z" fill="#fff" /></Pix></TrayButton>
          <TrayButton aria-label="Dropbox"><Pix smooth><path d="M4 1l4 3-4 3-4-3zM11 1l4 3-4 3-3-3zM4 7l4 3-4 3-4-3zM11 7l4 3-4 3-3-3z" fill="#fff" /><circle cx="11" cy="11" r="4.500" fill="#32a852" /><path d="M9 11l2 2 3-4" fill="none" stroke="#fff" strokeWidth="1.500" /></Pix></TrayButton>
        </Tray>
        <Clock>09:03 p.m.<br />18/04/2015</Clock>
        <ShowDesktop aria-label="Show desktop" />
      </TaskBar>
    </Screen>
  );
}
